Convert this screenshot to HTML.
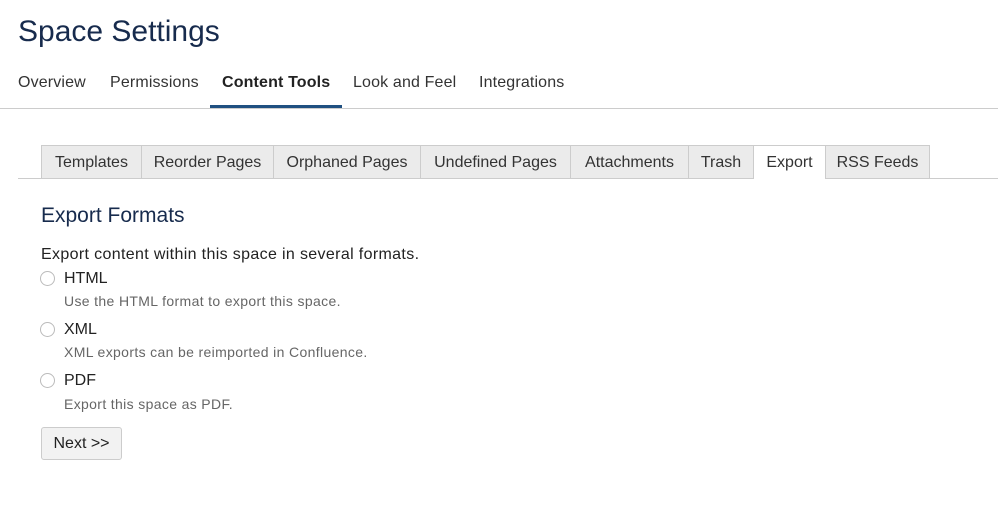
<!DOCTYPE html><html><head><style>
body{margin:0;width:998px;height:514px;background:#fff;font-family:"Liberation Sans",sans-serif;color:#172B4D;position:relative;overflow:hidden}
.a{position:absolute;white-space:nowrap}
.n{font-size:16px;color:#333;top:74px;letter-spacing:0.15px}
.tab{position:absolute;top:145px;height:33px;background:#ebebeb;border:1px solid #ccc;border-bottom:none;box-sizing:border-box;font-size:16px;color:#333;text-align:center;line-height:33px}
.r{position:absolute;left:40px;width:15px;height:15px;border:1px solid #bbb;border-radius:50%;box-sizing:border-box;background:#fff}
.l{font-size:16px;color:#222;left:64px}
.d{font-size:14px;color:#666;left:64px;letter-spacing:0.35px}
</style></head><body>
<div class="a" style="left:18px;top:15px;font-size:30px;color:#172B4D">Space Settings</div>
<div class="a n" style="left:18px">Overview</div>
<div class="a n" style="left:110px">Permissions</div>
<div class="a n" style="left:222px;font-weight:bold;color:#222">Content Tools</div>
<div class="a n" style="left:353px">Look and Feel</div>
<div class="a n" style="left:479px">Integrations</div>
<div class="a" style="left:0;top:108px;width:998px;height:1px;background:#ccc"></div>
<div class="a" style="left:210px;top:105px;width:132px;height:3px;background:#205081"></div>
<div class="a" style="left:18px;top:178px;width:980px;height:1px;background:#ccc"></div>
<div class="tab" style="left:41px;width:101px">Templates</div>
<div class="tab" style="left:141px;width:133px">Reorder Pages</div>
<div class="tab" style="left:273px;width:148px">Orphaned Pages</div>
<div class="tab" style="left:420px;width:151px">Undefined Pages</div>
<div class="tab" style="left:570px;width:119px">Attachments</div>
<div class="tab" style="left:688px;width:66px">Trash</div>
<div class="tab" style="left:753px;width:73px;background:#fff;height:34px">Export</div>
<div class="tab" style="left:825px;width:105px">RSS Feeds</div>
<div class="a" style="left:41px;top:204px;font-size:21px;color:#172B4D">Export Formats</div>
<div class="a" style="left:41px;top:246px;font-size:16px;color:#222;letter-spacing:0.35px">Export content within this space in several formats.</div>
<div class="r" style="top:271px"></div><div class="a l" style="top:270px">HTML</div>
<div class="a d" style="top:293px">Use the HTML format to export this space.</div>
<div class="r" style="top:322px"></div><div class="a l" style="top:321px">XML</div>
<div class="a d" style="top:344px">XML exports can be reimported in Confluence.</div>
<div class="r" style="top:373px"></div><div class="a l" style="top:372px">PDF</div>
<div class="a d" style="top:396px">Export this space as PDF.</div>
<div class="a" style="left:41px;top:427px;width:81px;height:33px;box-sizing:border-box;border:1px solid #ccc;border-radius:3px;background:#f2f2f2;font-size:16px;color:#222;text-align:center;line-height:31px">Next &gt;&gt;</div>
</body></html>
